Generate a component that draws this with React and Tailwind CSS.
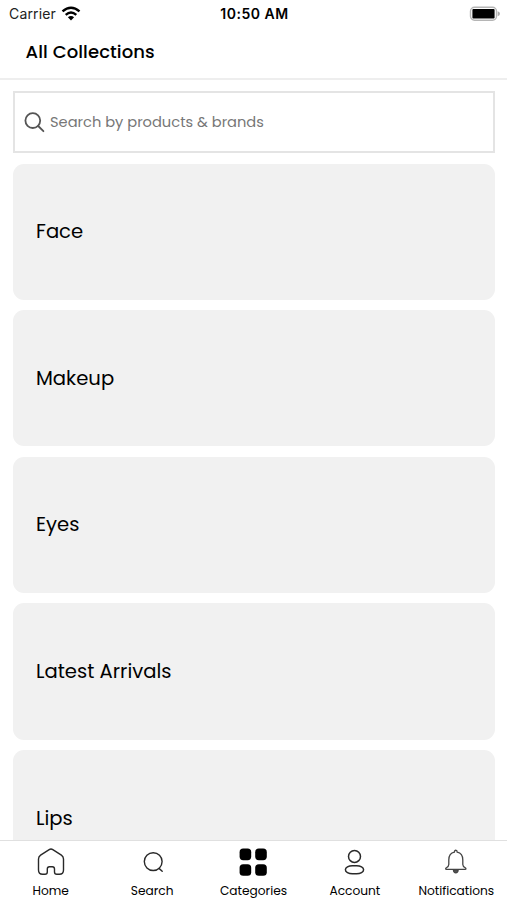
const collections = ["Face", "Makeup", "Eyes", "Latest Arrivals", "Lips"];

const HomeIcon = () => (
  <svg width="28" height="28" viewBox="0 0 28 28" fill="none" stroke="#292929" strokeWidth="1.4" strokeLinejoin="round">
    <path d="M12.2 1.6 3.6 7.2Q1.5 8.6 1.5 11V22Q1.5 26.3 5.6 26.3H8Q10.3 26.3 10.3 24V21Q10.3 18.8 12.4 18.8H15.4Q17.5 18.8 17.5 21V24Q17.5 26.3 19.8 26.3H22.4Q26.5 26.3 26.5 22V11Q26.5 8.6 24.4 7.2L15.8 1.6Q14 .4 12.2 1.6Z" />
  </svg>
);

const SearchIcon = () => (
  <svg width="28" height="28" viewBox="0 0 28 28" fill="none" stroke="#292929" strokeWidth="1.4" strokeLinecap="round">
    <circle cx="15.2" cy="13.6" r="8.9" />
    <path d="m21 20.4 3.2 2.8" />
  </svg>
);

const CategoriesIcon = () => (
  <svg width="28" height="28" viewBox="0 0 28 28" fill="#000">
    <rect x="0.6" y="0.6" width="11.6" height="11.6" rx="3.6" />
    <rect x="16.2" y="0.6" width="11.6" height="11.6" rx="3.6" />
    <rect x="0.6" y="16.2" width="11.6" height="11.6" rx="3.6" />
    <rect x="16.2" y="16.2" width="11.6" height="11.6" rx="3.6" />
  </svg>
);

const AccountIcon = () => (
  <svg width="28" height="28" viewBox="0 0 28 28" fill="none" stroke="#292929" strokeWidth="1.5">
    <circle cx="13.5" cy="8.4" r="6" />
    <rect x="4.4" y="17.8" width="18.2" height="8" rx="7" ry="4" />
  </svg>
);

const BellIcon = () => (
  <svg width="28" height="28" viewBox="0 0 28 28" fill="none" stroke="#444" strokeWidth="1.3" strokeLinejoin="round" strokeLinecap="round">
    <path d="M12.4 4.2C12.4 1.6 15.2 1.6 15.2 4.2C19 5 20.8 8 20.8 12V16.6C20.8 18.4 21.8 19 23.2 19.8Q24.8 21.1 23 21.3H4.6Q2.8 21.1 4.4 19.8C5.8 19 6.8 18.4 6.8 16.6V12C6.8 8 8.6 5 12.4 4.2Z" />
    <path d="M11.4 21.8C11.8 26 15.8 26 16.2 21.8Z" fill="#555" />
  </svg>
);

const tabs = [
  { label: "Home", icon: <HomeIcon /> },
  { label: "Search", icon: <SearchIcon /> },
  { label: "Categories", icon: <CategoriesIcon /> },
  { label: "Account", icon: <AccountIcon /> },
  { label: "Notifications", icon: <BellIcon /> },
];

const StatusBar = () => (
  <div className="grid h-7 shrink-0 grid-cols-3 items-center pl-[9px] pr-[7px] font-['Inter',sans-serif] text-black">
    <div className="flex items-center gap-[5px]">
      <span className="text-[14px] leading-5 tracking-[0.15px] text-[#222]">Carrier</span>
      <svg className="-mt-[2px]" width="20" height="15" viewBox="0 0 20 15" fill="none" stroke="#000" strokeWidth="2.4">
        <path d="M1.5 5.3Q10-2 18.5 5.3" />
        <path d="M4.7 8.8Q10 4.2 15.3 8.8" />
        <path d="M10 14.4 6.9 11.3Q10 8.7 13.1 11.3Z" fill="#000" stroke="none" />
      </svg>
    </div>
    <span className="whitespace-nowrap text-center text-[14px] font-semibold leading-5 tracking-[0.5px]">10:50 AM</span>
    <svg className="-mt-px justify-self-end" width="31" height="16" viewBox="0 0 31 16">
      <rect x="1.5" y="1.2" width="26" height="13" rx="4" fill="#fff" stroke="#b5b5b5" strokeWidth="1.4" />
      <rect x="3.4" y="3" width="22.2" height="9.4" rx="1" fill="#000" />
      <path d="M28.7 5.2Q31 6 31 7.7T28.7 10.2Z" fill="#aaa" />
    </svg>
  </div>
);

const App = () => {
  return (
    <div className="flex h-[900px] w-full flex-col overflow-hidden bg-white font-['Poppins','Inter',sans-serif] text-black">
      <StatusBar />

      <header className="flex h-[52px] shrink-0 items-center border-b-2 border-[#eeeeee] pb-[2px] pl-[25.5px]">
        <h1 className="text-[18px] font-medium leading-6 tracking-[0.1px]">All Collections</h1>
      </header>

      <main className="min-h-0 flex-1 overflow-hidden pl-[13px] pr-[12px] pt-[11px]">
        {/* Search box */}
        <div className="mb-[10.6px] flex h-[62px] items-center gap-[5px] border-2 border-[#e4e4e4] pl-[9px]">
          <svg width="21" height="21" viewBox="0 0 21 21" fill="none" stroke="#555" strokeWidth="1.8" strokeLinecap="round">
            <circle cx="8.8" cy="8.6" r="7.4" />
            <path d="m14.2 14 5.2 5.2" />
          </svg>
          <span className="text-[14.65px] leading-5 text-[#777]">Search by products &amp; brands</span>
        </div>

        <div className="flex flex-col gap-[10.4px]">
          {collections.map((name) => (
            <div key={name} className="flex h-[136.2px] shrink-0 items-center rounded-[11px] bg-[#f1f1f1] pb-[0.8px] pl-[23px]">
              <span className="text-[19.6px] leading-7">{name}</span>
            </div>
          ))}
        </div>
      </main>

      {/* Bottom tabs */}
      <nav className="grid h-[60px] shrink-0 grid-cols-5 border-t border-[#e0e0e0] bg-white">
        {tabs.map((tab) => (
          <div key={tab.label} className="flex flex-col items-center pt-[7px]">
            {tab.icon}
            <span className="mt-[6px] whitespace-nowrap text-[12.2px] leading-[18px]">{tab.label}</span>
          </div>
        ))}
      </nav>
    </div>
  );
};

export default App;
